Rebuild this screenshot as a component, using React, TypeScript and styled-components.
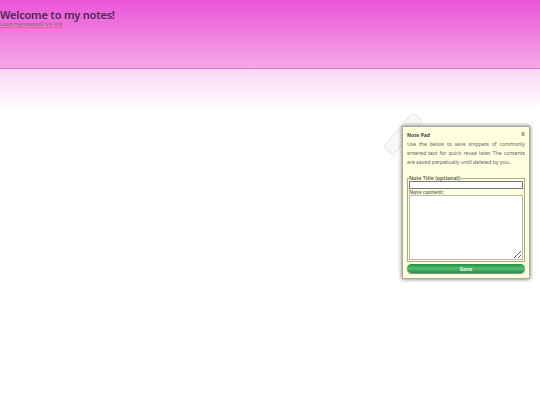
import React from "react";
import styled, { createGlobalStyle } from "styled-components";

const Global = createGlobalStyle`
  html, body {
    margin: 0;
    padding: 0;
    background: #fff;
    font-family: "Noto Sans", sans-serif;
  }
`;

const Page = styled.div`
  position: relative;
  width: 540px;
  height: 405px;
  overflow: hidden;
`;

const Header = styled.header`
  box-sizing: border-box;
  height: 69px;
  background: linear-gradient(#ea55d8, #f5a8e8);
  border-bottom: 1px solid #d67cc8;
`;

const Title = styled.h1`
  margin: 0;
  padding-top: 8px;
  font-size: 11px;
  line-height: 13px;
  letter-spacing: -0.2px;
  font-weight: 600;
  color: #4a2a55;
`;

const HeaderLink = styled.a`
  display: block;
  font-size: 5.2px;
  line-height: 6px;
  color: #5f7a5f;
  text-decoration: underline;
  text-decoration-color: #9a8a98;
  text-decoration-thickness: 0.5px;
`;

const Fade = styled.div`
  height: 40px;
  background: linear-gradient(#fcd4f5, #fff);
`;

const Ghost = styled.div`
  position: absolute;
  left: 396px;
  top: 111px;
  box-sizing: border-box;
  width: 14px;
  height: 46px;
  border: 1px solid #e8e8e8;
  border-radius: 2px;
  background: #f8f8f8;
  transform: rotate(41deg);
`;

const Panel = styled.aside`
  position: absolute;
  left: 402px;
  top: 126px;
  box-sizing: border-box;
  width: 128px;
  height: 153px;
  padding: 4px;
  background: #ffffe0;
  border: 1px solid #aaaa98;
  box-shadow: 0 0 4px #666;
  display: flex;
  flex-direction: column;
  color: #555;
`;

const PanelTop = styled.div`
  display: flex;
  justify-content: space-between;
  align-items: flex-start;
  height: 8px;
`;

const PanelTitle = styled.h2`
  margin: 1px 0 0;
  font-size: 5px;
  line-height: 6px;
  font-weight: 700;
  color: #444;
`;

const Close = styled.span`
  font-size: 7px;
  line-height: 5px;
  color: #555;
`;

const Intro = styled.p`
  margin: 1px 0 0;
  font-size: 5.2px;
  line-height: 9px;
  text-align: justify;
  color: #666;
`;

const Fields = styled.fieldset`
  margin: 8px 0 0;
  padding: 0 1px 1px;
  border: 1px solid #a9a98c;
  min-width: 0;
  display: flex;
  flex-direction: column;
`;

const Legend = styled.legend`
  padding: 0;
  font-size: 5.2px;
  line-height: 6px;
  font-weight: 600;
  color: #555;
`;

const FieldLabel = styled.label`
  display: block;
  font-size: 5.2px;
  line-height: 6px;
  font-weight: 600;
  color: #666;
`;

const TitleInput = styled.input`
  display: block;
  box-sizing: border-box;
  width: 100%;
  height: 8px;
  padding: 0;
  background: #fff;
  border: 1px solid #777;
  border-radius: 0;
  outline: none;
`;

const ContentInput = styled.textarea`
  display: block;
  box-sizing: border-box;
  width: 100%;
  height: 65px;
  padding: 0;
  background: #fff;
  border: 1px solid #b8b8a8;
  border-radius: 0;
  outline: none;
`;

const Save = styled.button`
  margin-top: 2px;
  height: 9px;
  padding: 0;
  border: none;
  border-radius: 5px;
  background: linear-gradient(#1f8f45, #55bb70 50%, #1f8f45);
  box-shadow: 0 1px 1px #888;
  color: #e8f5e8;
  font-family: "Noto Sans", sans-serif;
  font-size: 5.5px;
  font-weight: 700;
`;

export default function App() {
  return (
    <Page>
      <Global />
      <Header>
        <Title>Welcome to my notes!</Title>
        <HeaderLink>Load mynotepad2 via link</HeaderLink>
      </Header>
      <Fade />
      <Ghost />
      <Panel>
        <PanelTop>
          <PanelTitle>Note Pad</PanelTitle>
          <Close>x</Close>
        </PanelTop>
        <Intro>
          Use the below to save snippets of commonly entered text for quick reuse later. The
          contents are saved perpetually until deleted by you.
        </Intro>
        <Fields>
          <Legend>Note Title (optional):</Legend>
          <TitleInput />
          <FieldLabel>Note content:</FieldLabel>
          <ContentInput />
        </Fields>
        <Save>Save</Save>
      </Panel>
    </Page>
  );
}
